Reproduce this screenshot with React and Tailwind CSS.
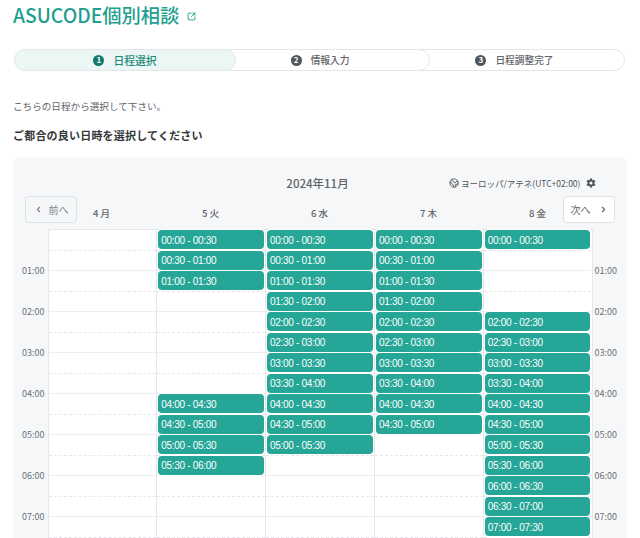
import React from 'react';
import { ChevronLeft, ChevronRight, Earth, SquareArrowOutUpRight } from 'lucide-react';
import { IoSettingsSharp } from 'react-icons/io5';

const font = '[font-family:"Noto_Sans_CJK_JP","Noto_Sans",sans-serif]';

const rows = Array.from({ length: 16 }, (_, i) => i);
const hours = ['01:00', '02:00', '03:00', '04:00', '05:00', '06:00', '07:00'];

const pad = (n) => String(n).padStart(2, '0');
const toTime = (i) => `${pad(Math.floor(i / 2))}:${i % 2 ? '30' : '00'}`;
const range = (from, to) => Array.from({ length: to - from + 1 }, (_, i) => from + i);

const days = [
  { label: '4 月', slots: [] },
  { label: '5 火', slots: [...range(0, 2), ...range(8, 11)] },
  { label: '6 水', slots: range(0, 10) },
  { label: '7 木', slots: range(0, 9) },
  { label: '8 金', slots: [0, ...range(4, 15)] },
];

const Step = ({ n, label, active, className }) => (
  <div
    className={`flex h-[22px] items-center justify-center rounded-full border border-[#e3e6e8] ${
      active ? 'bg-[#ecf7f5] text-[#1f8a7b]' : 'bg-white pr-[6px] text-[#5f6368]'
    } ${className}`}
  >
    <span
      className={`mr-[9px] flex h-[11px] w-[11px] items-center justify-center rounded-full text-[8px] leading-none font-bold text-white ${
        active ? 'bg-[#11796d]' : 'bg-[#4f5559]'
      }`}
    >
      {n}
    </span>
    <span className={`font-medium ${active ? 'text-[10.8px]' : 'text-[9.7px]'}`}>{label}</span>
  </div>
);

const Cell = ({ index, slot }) => (
  <div
    className={`box-border h-[20.5px] border-b px-[1px] ${
      index % 2 ? 'border-solid border-[#eceef0]' : 'border-dashed border-[#e6e8eb]'
    }`}
  >
    {slot && (
      <div className="flex h-[19px] items-center rounded-[4px] bg-[#25a696] pt-[1px] pl-[3px] [font-family:'Liberation_Sans',sans-serif] text-[10px] tracking-[-0.3px] text-white shadow-[0_0_0_1px_#ffffff]">
        {/* the last row only peeks in at the bottom edge, its text is below the fold */}
        {index < 15 && `${toTime(index)} - ${toTime(index + 1)}`}
      </div>
    )}
  </div>
);

const TimeLabels = ({ align }) => (
  <div className={`box-border flex w-[35px] flex-col pt-[34px] text-[9px] leading-[16px] text-[#6b7075] ${align}`}>
    {hours.map((h) => (
      <div key={h} className="h-[41px] shrink-0">
        {h}
      </div>
    ))}
  </div>
);

export default function App() {
  return (
    <div className={`h-[538px] w-[640px] overflow-hidden bg-white px-[13px] ${font}`}>
      <div className="flex h-[32px] items-center text-[#1f9f8f]">
        <h1 className="text-[19.3px] leading-none font-medium">ASUCODE個別相談</h1>
        <SquareArrowOutUpRight className="ml-[8px] h-[9px] w-[9px]" strokeWidth={2.5} />
      </div>

      <div className="mt-[17px] ml-[1px] flex w-[611px]">
        <Step n="1" label="日程選択" active className="relative z-30 w-[222px]" />
        <Step n="2" label="情報入力" className="relative z-20 -ml-[20px] w-[214px]" />
        <Step n="3" label="日程調整完了" className="relative z-10 -ml-[20px] w-[215px]" />
      </div>

      <p className="mt-[27px] text-[9.6px] leading-[16px] text-[#5f6368]">
        こちらの日程から選択して下さい。
      </p>
      <h2 className="mt-[13px] text-[11px] leading-[16px] font-bold tracking-[0.2px] text-[#33373a]">
        ご都合の良い日時を選択してください
      </h2>

      <div className="mt-[14px] h-[500px] w-[614px] rounded-t-[8px] bg-[#f6f7f9]">
        <div className="flex h-[35px] items-end pb-[1px]">
          <div className="w-[173px]" />
          <div className="w-[263px] text-center text-[11.5px] leading-[16px] font-medium text-[#5f6368]">2024年11月</div>
          <div className="flex items-center text-[8.5px] leading-[16px] text-[#4f5559]">
            <Earth className="mr-[2px] h-[10px] w-[10px]" strokeWidth={2} />
            ヨーロッパ/アテネ(UTC+02:00)
            <IoSettingsSharp className="ml-[6px] h-[10px] w-[10px]" />
          </div>
        </div>

        <div className="relative flex h-[37px] pt-[13px] pr-[35px] pl-[34px]">
          <button className="absolute top-[4px] left-[12px] flex h-[27px] w-[52px] items-center justify-center rounded-[4px] border border-[#dfe2e5] text-[10px] text-[#80858a]">
            <ChevronLeft className="mr-[6px] h-[9px] w-[9px]" strokeWidth={3} />
            前へ
          </button>
          {days.map((d) => (
            <div key={d.label} className="w-[109px] text-center text-[9.5px] leading-[16px] font-medium text-[#5f6368]">
              {d.label}
            </div>
          ))}
          <button className="absolute top-[4px] right-[12px] flex h-[27px] w-[52px] items-center justify-center rounded-[4px] border border-[#dfe2e5] bg-white text-[10px] text-[#5f6368]">
            次へ
            <ChevronRight className="ml-[8px] h-[9px] w-[9px]" strokeWidth={3} />
          </button>
        </div>

        <div className="flex">
          <TimeLabels align="items-end pr-[3px]" />
          <div className="flex w-[545px] border-t border-r border-[#e6e8eb] bg-white">
            {days.map((d) => (
              <div key={d.label} className="w-[109px] border-l border-[#e6e8eb]">
                {rows.map((r) => (
                  <Cell key={r} index={r} slot={d.slots.includes(r)} />
                ))}
              </div>
            ))}
          </div>
          <TimeLabels align="items-start pl-[2px]" />
        </div>
      </div>
    </div>
  );
}
